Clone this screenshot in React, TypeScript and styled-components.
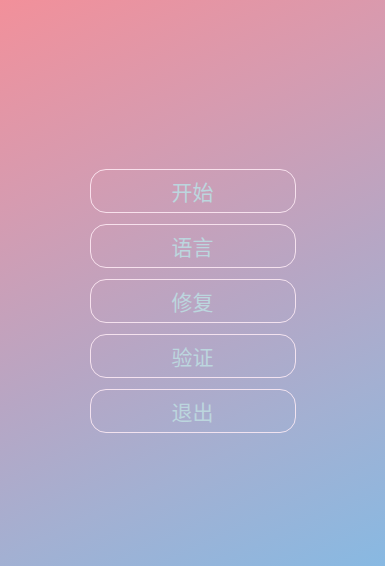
import React from "react";
import styled, { createGlobalStyle } from "styled-components";

const Global = createGlobalStyle`
  html, body { margin: 0; padding: 0; }
  body { font-family: "Noto Sans CJK SC", "Noto Sans", sans-serif; }
`;

const Screen = styled.div`
  width: 385px;
  height: 566px;
  box-sizing: border-box;
  padding-top: 169px;
  background: linear-gradient(155deg, #f2909a 0%, #d69bb0 28%, #b7a6c4 55%, #a3b0d2 75%, #88b9e2 100%);
  display: flex;
  flex-direction: column;
  align-items: center;
  gap: 11px;
  overflow: hidden;
`;

const MenuButton = styled.button`
  width: 206px;
  height: 44px;
  box-sizing: border-box;
  border: 1.5px solid rgba(255, 236, 246, 0.85);
  border-radius: 16px;
  background: transparent;
  color: #bcd6de;
  font-family: "Noto Sans CJK SC", "Noto Sans", sans-serif;
  font-size: 21px;
  letter-spacing: 0;
  padding: 0;
  display: flex;
  align-items: center;
  justify-content: center;
  cursor: pointer;
`;

const items = ["开始", "语言", "修复", "验证", "退出"];

export default function App() {
  return (
    <>
      <Global />
      <Screen>
        {items.map((t) => (
          <MenuButton key={t}>{t}</MenuButton>
        ))}
      </Screen>
    </>
  );
}
